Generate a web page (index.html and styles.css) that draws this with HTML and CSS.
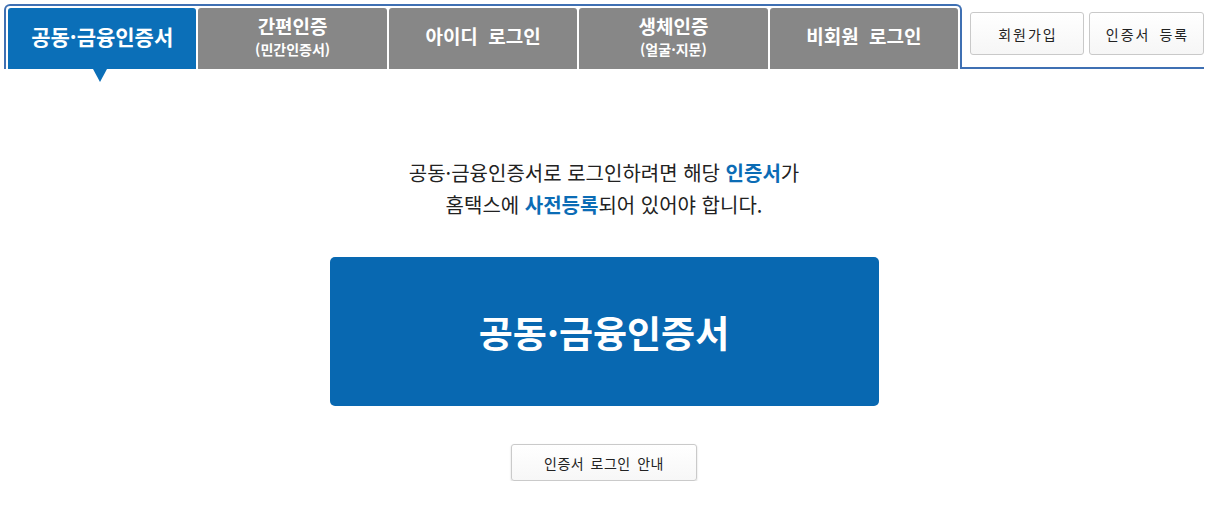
FILE: index.html
```html
<!DOCTYPE html>
<html lang="ko">
<head>
  <meta charset="UTF-8">
  <title>홈택스 로그인</title>
  <meta name="viewport" content="width=device-width, initial-scale=1.0">
  <link rel="stylesheet" href="styles.css">
</head>
<body>

  <div class="page">

    <!-- 로그인 방식 탭 -->
    <div class="topbar">
      <ul class="tabs">
        <li class="tab active">공동·금융인증서</li>
        <li class="tab"><span class="main">간편인증</span><span class="sub">(민간인증서)</span></li>
        <li class="tab">아이디 로그인</li>
        <li class="tab"><span class="main">생체인증</span><span class="sub">(얼굴·지문)</span></li>
        <li class="tab">비회원 로그인</li>
      </ul>
      <div class="side">
        <button class="side-btn">회원가입</button>
        <button class="side-btn wide">인증서 등록</button>
      </div>
    </div>

    <!-- 인증서 로그인 -->
    <div class="content">
      <p class="notice">
        공동·금융인증서로 로그인하려면 해당 <strong>인증서</strong>가<br>
        홈택스에 <strong>사전등록</strong>되어 있어야 합니다.
      </p>
      <button class="cert-btn">공동·금융인증서</button>
      <button class="guide-btn">인증서 로그인 안내</button>
    </div>

  </div>

</body>
</html>
```

FILE: styles.css
```css
/* Reset */
* {
  box-sizing: border-box;
}

body {
  margin: 0;
  background: #fff;
  color: #222;
  font-family: "Noto Sans CJK KR", "Noto Sans", sans-serif;
}

.page {
  padding: 4px 8px 0 4px;
}

/* 상단 탭 */
.topbar {
  display: flex;
}

.tabs {
  list-style: none;
  margin: 0;
  padding: 2px 2px 0;
  width: 958px;
  display: flex;
  gap: 2px;
  border: 2px solid #3f70b3;
  border-bottom: 0;
  border-radius: 6px 6px 0 0;
}

.tab {
  position: relative;
  flex: 1;
  height: 61px;
  padding-bottom: 5px;
  display: flex;
  flex-direction: column;
  align-items: center;
  justify-content: center;
  background: #878787;
  border-radius: 3px 3px 0 0;
  color: #fff;
  font-size: 19px;
  font-weight: bold;
  line-height: 24px;
  word-spacing: 5px;
}

.tab .sub {
  margin-top: 1px;
  font-size: 14px;
  line-height: 20px;
  word-spacing: 0;
}

.tab.active {
  background: #0b6fb8;
  font-size: 21px;
}

.tab.active::after {
  content: "";
  position: absolute;
  top: 100%;
  left: 50%;
  margin-left: -9px;
  border-left: 7px solid transparent;
  border-right: 7px solid transparent;
  border-top: 13px solid #0b6fb8;
}

.side {
  flex: 1;
  height: 65px;
  padding-top: 8px;
  display: flex;
  justify-content: flex-end;
  align-items: flex-start;
  gap: 5px;
  border-bottom: 2px solid #3f70b3;
}

.side-btn {
  width: 114px;
  height: 43px;
  padding: 0 0 0 2px;
  background: linear-gradient(#fff, #f6f6f6);
  border: 1px solid #c9c9c9;
  border-radius: 3px;
  color: #222;
  font-family: inherit;
  font-size: 14px;
  letter-spacing: 2px;
  word-spacing: 3px;
}

.side-btn.wide {
  width: 115px;
}

/* 본문 */
.content {
  text-align: center;
}

.notice {
  margin: 88px 0 0;
  font-size: 20px;
  line-height: 32px;
  color: #222;
}

.notice strong {
  color: #0b6cb5;
}

.cert-btn {
  display: block;
  width: 549px;
  height: 149px;
  margin: 36px auto 0;
  background: #0868b1;
  border: 0;
  border-radius: 5px;
  color: #fff;
  font-family: inherit;
  font-size: 37px;
  font-weight: bold;
}

.guide-btn {
  display: block;
  width: 186px;
  height: 37px;
  margin: 38px auto 0;
  background: linear-gradient(#fff, #f7f7f7);
  border: 1px solid #cacaca;
  border-radius: 3px;
  box-shadow: 0 1px 2px rgba(0, 0, 0, 0.18);
  color: #222;
  font-family: inherit;
  font-size: 14px;
  letter-spacing: 0.5px;
  word-spacing: 2px;
}
```
